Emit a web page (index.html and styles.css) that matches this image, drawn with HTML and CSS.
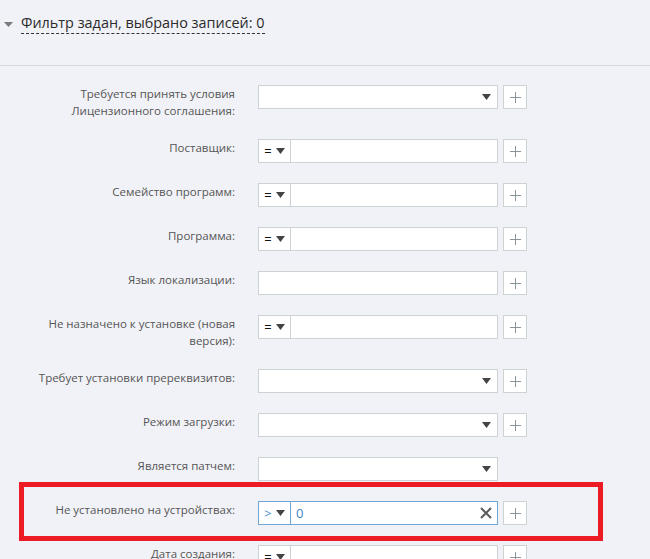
FILE: index.html
```html
<!DOCTYPE html>
<html>
<head>
  <meta charset="utf-8">
  <title>Фильтр</title>
  <link rel="stylesheet" href="styles.css">
</head>
<body>
  <div class="filter_head">
    <svg class="caret" width="9" height="5" viewBox="0 0 9 5"><polygon points="0,0 9,0 4.5,5" fill="#7a7a7a"/></svg>
    <span class="filter_title">Фильтр задан, выбрано записей: 0</span>
  </div>

  <div class="filter_form">
    <div class="row">
      <div class="lbl">Требуется принять условия Лицензионного соглашения:</div>
      <div class="field sel"><span class="val"></span><svg class="arr" width="9" height="6" viewBox="0 0 9 6"><polygon points="0,0 9,0 4.5,6" fill="#444"/></svg></div>
      <div class="add"><svg width="11" height="11" viewBox="0 0 11 11"><path d="M5.5 0V11M0 5.5H11" stroke="#8b969a" stroke-width="1"/></svg></div>
    </div>
    <div class="row">
      <div class="lbl">Поставщик:</div>
      <div class="field"><span class="op"><span>=</span><svg width="9" height="6" viewBox="0 0 9 6"><polygon points="0,0 9,0 4.5,6" fill="#444"/></svg></span><span class="val"></span></div>
      <div class="add"><svg width="11" height="11" viewBox="0 0 11 11"><path d="M5.5 0V11M0 5.5H11" stroke="#8b969a" stroke-width="1"/></svg></div>
    </div>
    <div class="row">
      <div class="lbl">Семейство программ:</div>
      <div class="field"><span class="op"><span>=</span><svg width="9" height="6" viewBox="0 0 9 6"><polygon points="0,0 9,0 4.5,6" fill="#444"/></svg></span><span class="val"></span></div>
      <div class="add"><svg width="11" height="11" viewBox="0 0 11 11"><path d="M5.5 0V11M0 5.5H11" stroke="#8b969a" stroke-width="1"/></svg></div>
    </div>
    <div class="row">
      <div class="lbl">Программа:</div>
      <div class="field"><span class="op"><span>=</span><svg width="9" height="6" viewBox="0 0 9 6"><polygon points="0,0 9,0 4.5,6" fill="#444"/></svg></span><span class="val"></span></div>
      <div class="add"><svg width="11" height="11" viewBox="0 0 11 11"><path d="M5.5 0V11M0 5.5H11" stroke="#8b969a" stroke-width="1"/></svg></div>
    </div>
    <div class="row">
      <div class="lbl">Язык локализации:</div>
      <div class="field"><span class="val"></span></div>
      <div class="add"><svg width="11" height="11" viewBox="0 0 11 11"><path d="M5.5 0V11M0 5.5H11" stroke="#8b969a" stroke-width="1"/></svg></div>
    </div>
    <div class="row">
      <div class="lbl">Не назначено к установке (новая версия):</div>
      <div class="field"><span class="op"><span>=</span><svg width="9" height="6" viewBox="0 0 9 6"><polygon points="0,0 9,0 4.5,6" fill="#444"/></svg></span><span class="val"></span></div>
      <div class="add"><svg width="11" height="11" viewBox="0 0 11 11"><path d="M5.5 0V11M0 5.5H11" stroke="#8b969a" stroke-width="1"/></svg></div>
    </div>
    <div class="row">
      <div class="lbl">Требует установки пререквизитов:</div>
      <div class="field sel"><span class="val"></span><svg class="arr" width="9" height="6" viewBox="0 0 9 6"><polygon points="0,0 9,0 4.5,6" fill="#444"/></svg></div>
      <div class="add"><svg width="11" height="11" viewBox="0 0 11 11"><path d="M5.5 0V11M0 5.5H11" stroke="#8b969a" stroke-width="1"/></svg></div>
    </div>
    <div class="row">
      <div class="lbl">Режим загрузки:</div>
      <div class="field sel"><span class="val"></span><svg class="arr" width="9" height="6" viewBox="0 0 9 6"><polygon points="0,0 9,0 4.5,6" fill="#444"/></svg></div>
      <div class="add"><svg width="11" height="11" viewBox="0 0 11 11"><path d="M5.5 0V11M0 5.5H11" stroke="#8b969a" stroke-width="1"/></svg></div>
    </div>
    <div class="row">
      <div class="lbl">Является патчем:</div>
      <div class="field sel"><span class="val"></span><svg class="arr" width="9" height="6" viewBox="0 0 9 6"><polygon points="0,0 9,0 4.5,6" fill="#444"/></svg></div>
    </div>
    <div class="row marked">
      <div class="lbl">Не установлено на устройствах:</div>
      <div class="field active"><span class="op"><span>&gt;</span><svg width="9" height="6" viewBox="0 0 9 6"><polygon points="0,0 9,0 4.5,6" fill="#444"/></svg></span><span class="val">0</span><svg class="clr" width="12" height="12" viewBox="0 0 12 12"><path d="M1 1L11 11M11 1L1 11" stroke="#5a5a5a" stroke-width="2"/></svg></div>
      <div class="add"><svg width="11" height="11" viewBox="0 0 11 11"><path d="M5.5 0V11M0 5.5H11" stroke="#8b969a" stroke-width="1"/></svg></div>
      <div class="hl_box"></div>
    </div>
    <div class="row">
      <div class="lbl">Дата создания:</div>
      <div class="field"><span class="op"><span>=</span><svg width="9" height="6" viewBox="0 0 9 6"><polygon points="0,0 9,0 4.5,6" fill="#444"/></svg></span><span class="val"></span></div>
      <div class="add"><svg width="11" height="11" viewBox="0 0 11 11"><path d="M5.5 0V11M0 5.5H11" stroke="#8b969a" stroke-width="1"/></svg></div>
    </div>
  </div>
</body>
</html>
```

FILE: styles.css
```css
html, body {
  margin: 0;
  overflow: hidden;
}
body {
  font-family: "Open Sans", "Noto Sans", sans-serif;
  background-color: #f1f2f7;
  color: #333;
}
.filter_head {
  box-sizing: border-box;
  height: 66px;
  padding: 13px 0 0 4px;
  border-bottom: 1px solid #d7d8dc;
  display: flex;
  align-items: flex-start;
}
.caret {
  margin-top: 9px;
  margin-right: 8px;
}
.filter_title {
  font-size: 14.4px;
  line-height: 20px;
  color: #2b2b2b;
  border-bottom: 1px dashed #333;
}
.filter_form {
  padding-top: 19px;
}
.row {
  position: relative;
  display: flex;
  align-items: flex-start;
  min-height: 24px;
  margin-bottom: 20px;
}
.lbl {
  box-sizing: border-box;
  width: 235px;
  padding-left: 30px;
  margin-right: 23px;
  text-align: right;
  font-size: 11.5px;
  line-height: 17px;
  color: #555;
}
.field {
  box-sizing: border-box;
  width: 240px;
  height: 24px;
  border: 1px solid #ccd3d3;
  background-color: #fff;
  display: flex;
  align-items: center;
  font-size: 13px;
}
.op {
  box-sizing: border-box;
  width: 32px;
  height: 100%;
  border-right: 1px solid #ccd3d3;
  display: flex;
  align-items: center;
  justify-content: center;
  gap: 4px;
  color: #111;
  font-size: 13px;
}
.val {
  flex: 1;
  padding-left: 6px;
}
.arr {
  margin-right: 6px;
}
.add {
  box-sizing: border-box;
  width: 24px;
  height: 24px;
  margin-left: 5px;
  border: 1px solid #ccd3d3;
  background-color: #fff;
  display: flex;
  align-items: center;
  justify-content: center;
}
.field.active {
  border-color: #6fa6d6;
}
.field.active .op {
  border-right-color: #6fa6d6;
  color: #4a90d0;
}
.field.active .val {
  color: #3f86c8;
  padding-left: 5px;
}
.clr {
  margin-right: 5px;
}
.hl_box {
  position: absolute;
  left: 19px;
  top: -19px;
  width: 584px;
  height: 59px;
  box-sizing: border-box;
  border: 5px solid #ed1c24;
}
```
